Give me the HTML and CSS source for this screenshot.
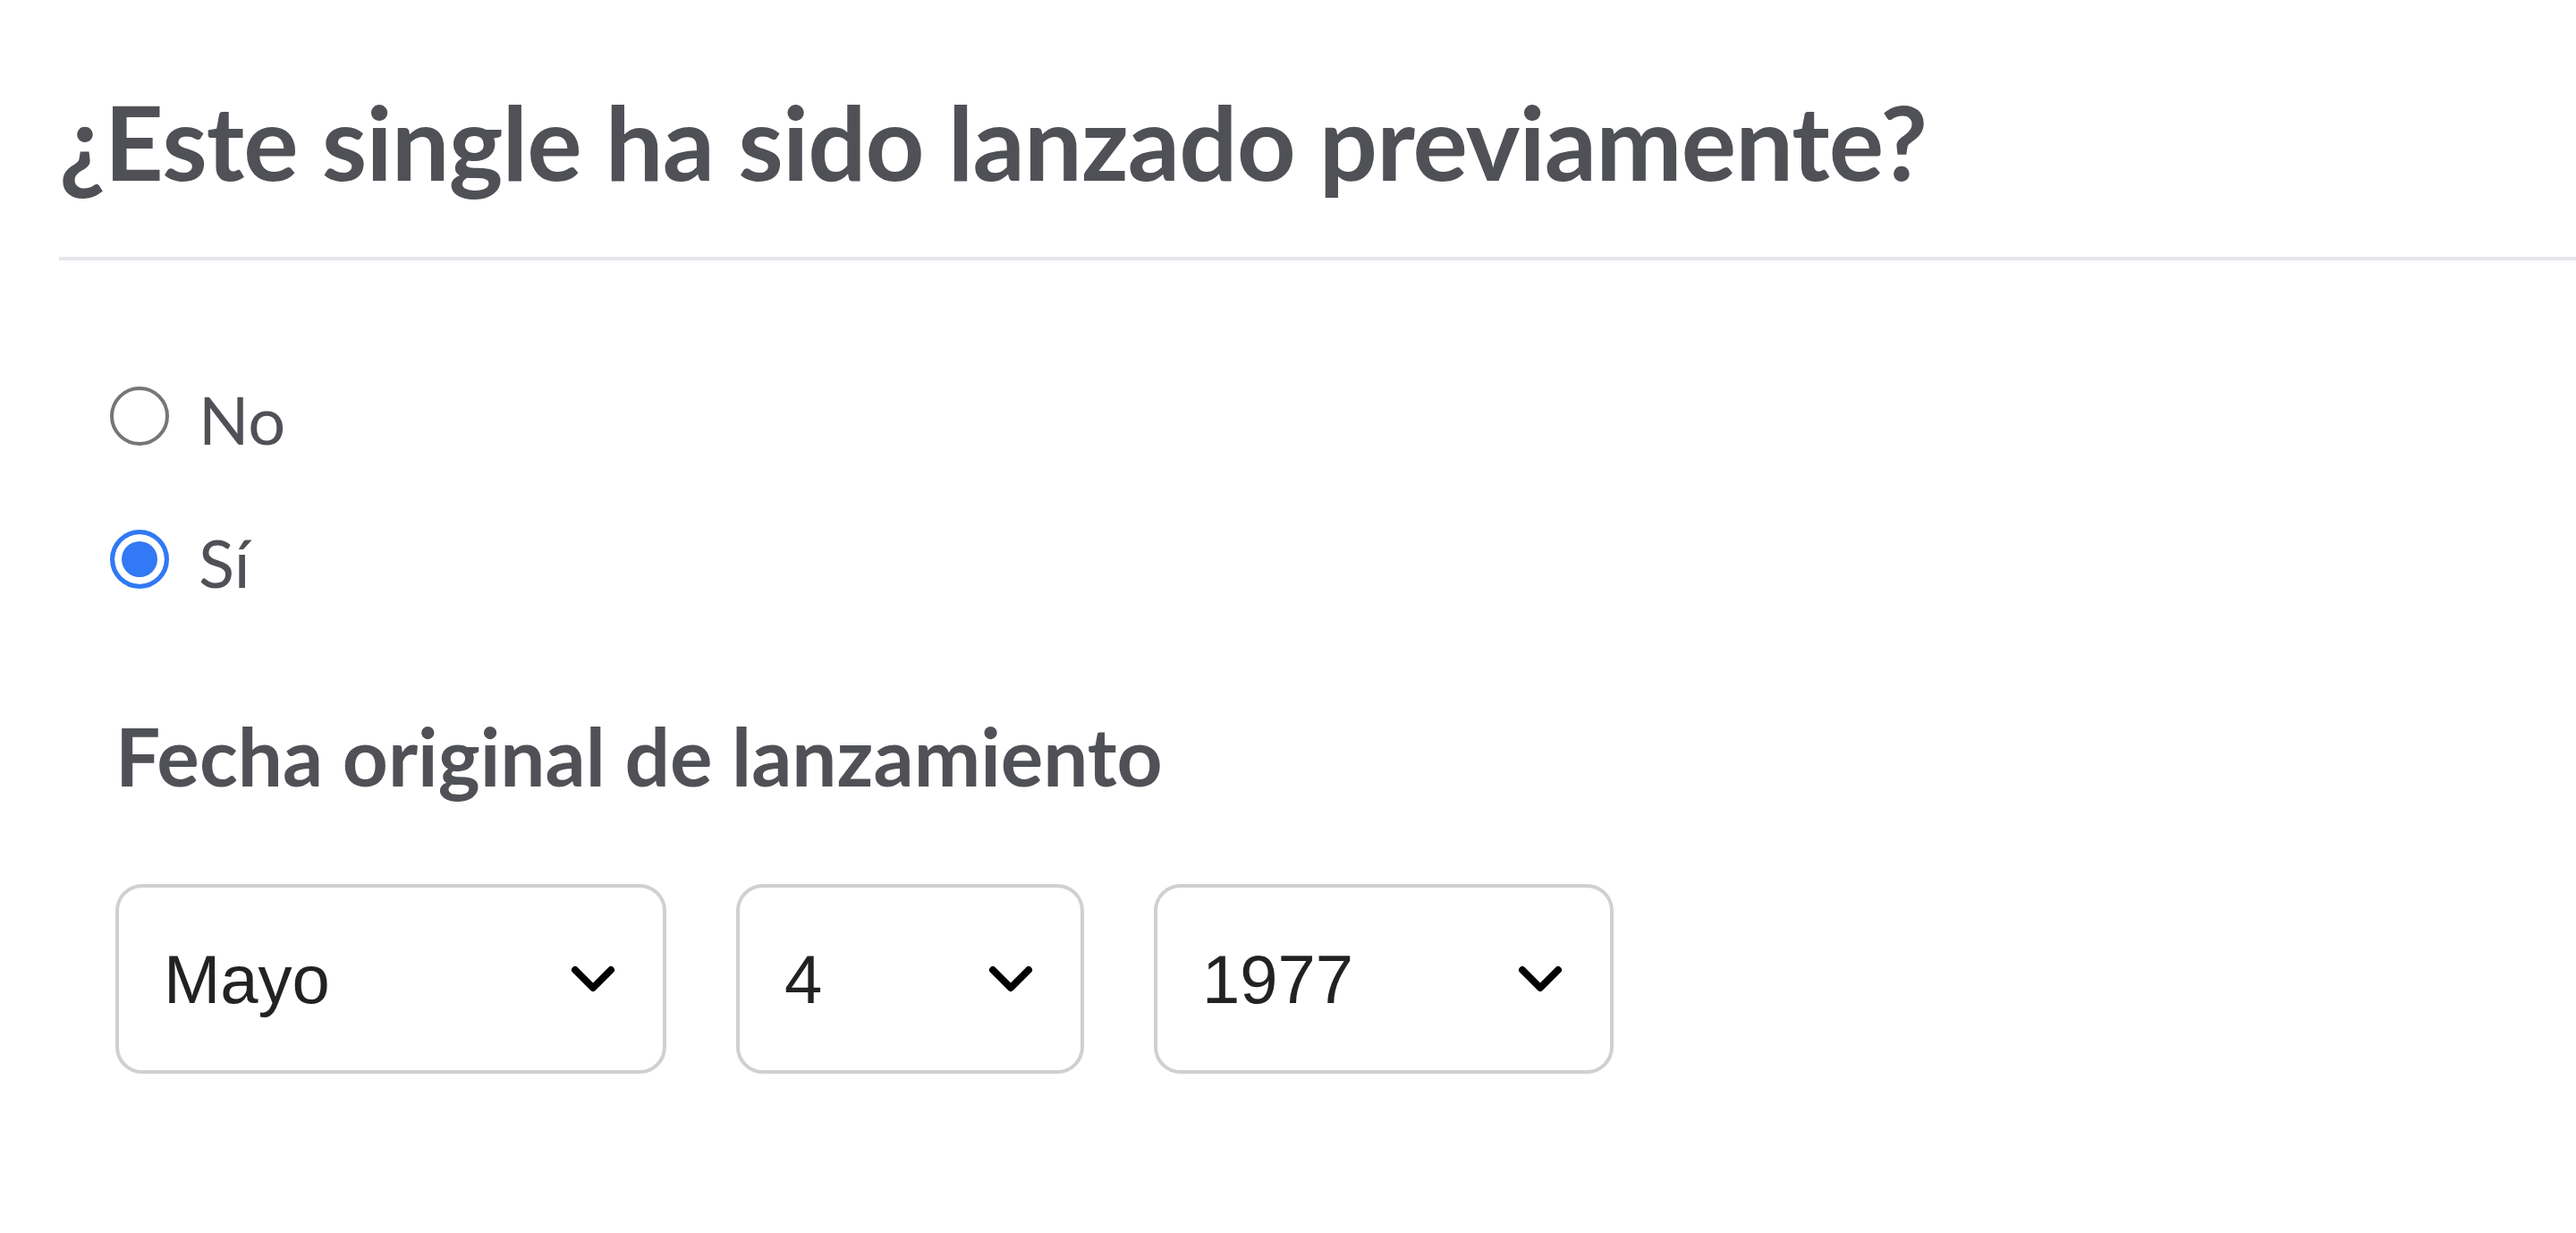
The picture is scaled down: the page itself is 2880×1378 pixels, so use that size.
FILE: index.html
```html
<!DOCTYPE html>
<html lang="es">
<head>
  <meta charset="UTF-8" />
  <meta name="viewport" content="width=device-width, initial-scale=1.0" />
  <title>Lanzamiento previo</title>
  <link rel="stylesheet" href="styles.css">
</head>
<body>
  <div id="release">
    <h1 class="release-title">¿Este single ha sido lanzado previamente?</h1>

    <div class="release-body">
      <div class="radio-list">
        <label class="radio-row">
          <input type="radio" name="released" value="no" />
          <span>No</span>
        </label>
        <label class="radio-row">
          <input type="radio" name="released" value="si" checked />
          <span>Sí</span>
        </label>
      </div>

      <h2 class="date-title">Fecha original de lanzamiento</h2>

      <div class="date-row">
        <div class="select-wrap select-month">
          <select name="month">
            <option>Enero</option>
            <option>Febrero</option>
            <option>Marzo</option>
            <option>Abril</option>
            <option selected>Mayo</option>
            <option>Junio</option>
            <option>Julio</option>
            <option>Agosto</option>
            <option>Septiembre</option>
            <option>Octubre</option>
            <option>Noviembre</option>
            <option>Diciembre</option>
          </select>
          <svg class="chevron" viewBox="0 0 50 30" width="50" height="30"><path d="M5 5 L25 25 L45 5" /></svg>
        </div>
        <div class="select-wrap select-day">
          <select name="day">
            <option>1</option>
            <option>2</option>
            <option>3</option>
            <option selected>4</option>
            <option>5</option>
          </select>
          <svg class="chevron" viewBox="0 0 50 30" width="50" height="30"><path d="M5 5 L25 25 L45 5" /></svg>
        </div>
        <div class="select-wrap select-year">
          <select name="year">
            <option>1975</option>
            <option>1976</option>
            <option selected>1977</option>
            <option>1978</option>
          </select>
          <svg class="chevron" viewBox="0 0 50 30" width="50" height="30"><path d="M5 5 L25 25 L45 5" /></svg>
        </div>
      </div>
    </div>
  </div>
</body>
</html>
```

FILE: styles.css
```css
body {
  margin: 0;
  padding: 0;
  background-color: #fff;
  font-family: Lato, "Noto Sans", sans-serif;
  color: #505157;
}

#release {
  padding-left: 66px;
}

.release-title {
  margin: 0;
  padding-top: 88px;
  padding-bottom: 61px;
  font-size: 115px;
  font-weight: 700;
  line-height: 1.2;
  letter-spacing: -0.9px;
  border-bottom: 4px solid #e6e6eb;
}

.release-body {
  padding-left: 57px;
}

.radio-list {
  display: flex;
  flex-direction: column;
  gap: 69px;
  margin-top: 128px;
}

.radio-row {
  display: flex;
  align-items: center;
  gap: 33px;
  font-size: 74px;
  line-height: 91px;
  cursor: pointer;
}

.radio-row span {
  position: relative;
  top: 4px;
}

.radio-row input {
  appearance: none;
  -webkit-appearance: none;
  margin: 0;
  width: 66px;
  height: 66px;
  border: 4px solid #767676;
  border-radius: 50%;
  background-color: #fff;
  flex-shrink: 0;
}

.radio-row input:checked {
  border: 5px solid #3179f5;
  background-color: #3179f5;
  box-shadow: inset 0 0 0 8px #fff;
}

.date-title {
  margin: 121px 0 0 6px;
  font-size: 89px;
  font-weight: 700;
  line-height: 108px;
}

.date-row {
  display: flex;
  gap: 78px;
  margin-top: 89px;
  margin-left: 6px;
}

.select-wrap {
  position: relative;
}

.select-wrap select {
  appearance: none;
  -webkit-appearance: none;
  width: 100%;
  height: 212px;
  margin: 0;
  padding: 0 0 0 50px;
  border: 4px solid #d0d0d0;
  border-radius: 30px;
  background-color: #fff;
  font-family: "Liberation Sans", Arial, sans-serif;
  font-size: 76px;
  color: #222;
  outline: none;
}

.select-month {
  width: 616px;
}

.select-day {
  width: 389px;
}

.select-year {
  width: 514px;
}

.chevron {
  position: absolute;
  right: 57px;
  top: 91px;
  pointer-events: none;
}

.chevron path {
  fill: none;
  stroke: #000;
  stroke-width: 8;
  stroke-linecap: round;
  stroke-linejoin: round;
}
```
